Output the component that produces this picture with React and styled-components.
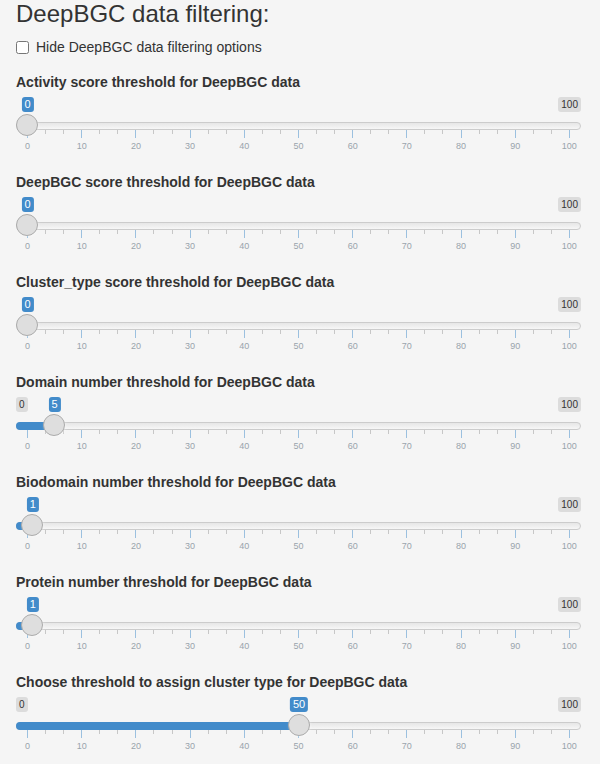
import React from "react";
import styled, { createGlobalStyle } from "styled-components";

const Global = createGlobalStyle`
  body {
    margin: 0;
    background: #f5f5f5;
    font-family: "Liberation Sans", Arial, sans-serif;
    color: #333;
  }
`;

const Panel = styled.div`
  width: 565px;
  padding-left: 16px;
  background: #f5f5f5;
  min-height: 764px;
  display: flex;
  flex-direction: column;
`;

const Title = styled.h3`
  margin: 0 0 10px;
  padding-top: 1px;
  font-size: 24px;
  font-weight: 500;
  line-height: 26.4px;
`;

const CheckRow = styled.label`
  display: flex;
  align-items: flex-start;
  gap: 7px;
  height: 20px;
  font-size: 14px;
  line-height: 20px;
  margin-bottom: 15px;
`;

const Box = styled.input`
  width: 13px;
  height: 13px;
  margin: 4px 0 0;
`;

const Group = styled.div`
  display: flex;
  flex-direction: column;
  margin-bottom: 15px;
`;

const Label = styled.div`
  font-size: 14px;
  font-weight: 700;
  line-height: 20px;
  margin-bottom: 5px;
`;

const Slider = styled.div`
  display: flex;
  flex-direction: column;
  height: 60px;
`;

const LabelRow = styled.div`
  position: relative;
  height: 17px;
  display: flex;
  justify-content: space-between;
  align-items: flex-start;
`;

const Chip = styled.span`
  padding: 1px 3px;
  border-radius: 3px;
  font-size: 10px;
  line-height: 13px;
  color: #333;
  background: rgba(0, 0, 0, 0.1);
  visibility: ${(p) => (p.$hidden ? "hidden" : "visible")};
`;

const Bubble = styled.span`
  position: absolute;
  top: 0;
  transform: translateX(-50%);
  padding: 1px 3px;
  border-radius: 3px;
  font-size: 11px;
  line-height: 13px;
  white-space: nowrap;
  color: #fff;
  background: #428bca;
  z-index: 2;
`;

const TrackArea = styled.div`
  position: relative;
  height: 16px;
`;

const Line = styled.div`
  position: absolute;
  top: 8px;
  left: 0;
  right: 0;
  height: 8px;
  box-sizing: border-box;
  border: 1px solid #cccccc;
  border-radius: 8px;
  background-color: #ededed;
  background: linear-gradient(to bottom, #dedede -50%, #fff 150%);
`;

const Bar = styled.div`
  position: absolute;
  top: 8px;
  left: 0;
  height: 8px;
  background: #428bca;
  border-radius: 8px 0 0 8px;
`;

const Handle = styled.div`
  position: absolute;
  top: 0;
  width: 22px;
  height: 22px;
  box-sizing: border-box;
  border: 1px solid #ababab;
  background: #dedede;
  border-radius: 22px;
  box-shadow: 1px 1px 3px rgba(255, 255, 255, 0.3);
  z-index: 1;
`;

const TickRow = styled.div`
  margin: 0 11px;
  height: 11px;
  display: flex;
  justify-content: space-between;
  align-items: flex-start;
`;

const Tick = styled.span`
  width: 1px;
  height: ${(p) => (p.$big ? "8px" : "4px")};
  background: ${(p) => (p.$big ? "#428bca" : "#999")};
  opacity: 0.5;
`;

const TextRow = styled.div`
  margin: 0 11px;
  display: flex;
  justify-content: space-between;
`;

const TextSlot = styled.span`
  width: 1px;
  display: flex;
  justify-content: center;
  font-size: 9px;
  line-height: 11px;
  color: #99a4ac;
  white-space: nowrap;
`;

const START = 11;
const SPAN = 543;
const pos = (v) => START + (v / 100) * SPAN;

const ticks = Array.from({ length: 31 }, (_, i) => i);
const gridValues = Array.from({ length: 11 }, (_, i) => i * 10);

function RangeSlider({ label, value }) {
  const center = pos(value);
  const singleText = String(value);
  const singleWidth = singleText.length * 6.1 + 6;
  const hideMin = center - singleWidth / 2 <= 13;
  return (
    <Group>
      <Label>{label}</Label>
      <Slider>
        <LabelRow>
          <Chip $hidden={hideMin}>0</Chip>
          <Chip>100</Chip>
          <Bubble style={{ left: center + 0.5 }}>{singleText}</Bubble>
        </LabelRow>
        <TrackArea>
          <Line />
          {value > 0 && <Bar style={{ width: center }} />}
          <Handle style={{ left: center - 11 }} />
        </TrackArea>
        <TickRow>
          {ticks.map((i) => (
            <Tick key={i} $big={i % 3 === 0} />
          ))}
        </TickRow>
        <TextRow>
          {gridValues.map((v) => (
            <TextSlot key={v}>{v}</TextSlot>
          ))}
        </TextRow>
      </Slider>
    </Group>
  );
}

const sliders = [
  ["Activity score threshold for DeepBGC data", 0],
  ["DeepBGC score threshold for DeepBGC data", 0],
  ["Cluster_type score threshold for DeepBGC data", 0],
  ["Domain number threshold for DeepBGC data", 5],
  ["Biodomain number threshold for DeepBGC data", 1],
  ["Protein number threshold for DeepBGC data", 1],
  ["Choose threshold to assign cluster type for DeepBGC data", 50],
];

export default function App() {
  return (
    <>
      <Global />
      <Panel>
        <Title>DeepBGC data filtering:</Title>
        <CheckRow>
          <Box type="checkbox" />
          Hide DeepBGC data filtering options
        </CheckRow>
        {sliders.map(([l, v]) => (
          <RangeSlider key={l} label={l} value={v} />
        ))}
      </Panel>
    </>
  );
}
